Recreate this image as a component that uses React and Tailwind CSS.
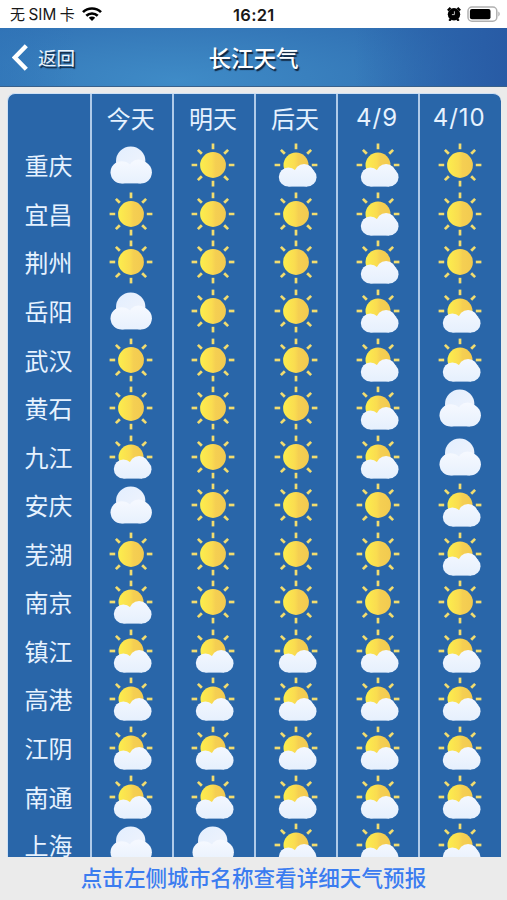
import React from 'react';

// s = sunny, p = partly cloudy, c = cloudy
const days = ['今天', '明天', '后天', '4/9', '4/10'];

const cities = [
  { name: '重庆', forecast: 'cspps' },
  { name: '宜昌', forecast: 'sssps' },
  { name: '荆州', forecast: 'sssps' },
  { name: '岳阳', forecast: 'csspp' },
  { name: '武汉', forecast: 'ssspp' },
  { name: '黄石', forecast: 'ssspc' },
  { name: '九江', forecast: 'psspc' },
  { name: '安庆', forecast: 'csssp' },
  { name: '芜湖', forecast: 'ssssp' },
  { name: '南京', forecast: 'pssss' },
  { name: '镇江', forecast: 'ppppp' },
  { name: '高港', forecast: 'ppppp' },
  { name: '江阴', forecast: 'ppppp' },
  { name: '南通', forecast: 'ppppp' },
  { name: '上海', forecast: 'ccppp' },
];

const Gradients = () => (
  <svg className="absolute w-0 h-0" aria-hidden="true">
    <defs>
      <linearGradient id="sun" x1="0" x2="1" y1="0" y2="0">
        <stop offset="0" stopColor="#fcee4d" />
        <stop offset="0.45" stopColor="#fadc50" />
        <stop offset="0.6" stopColor="#f5cf52" />
        <stop offset="1" stopColor="#f2ca50" />
      </linearGradient>
      <linearGradient id="cloudBack" gradientUnits="userSpaceOnUse" x1="-14" x2="8" y1="-14" y2="8">
        <stop offset="0" stopColor="#e4effe" />
        <stop offset="1" stopColor="#eff3fc" />
      </linearGradient>
      <linearGradient id="cloudFront" gradientUnits="userSpaceOnUse" x1="0" x2="0" y1="-5" y2="21">
        <stop offset="0" stopColor="#f6f9ff" />
        <stop offset="1" stopColor="#e6f0fd" />
      </linearGradient>
    </defs>
  </svg>
);

const Rays = ({ half }) => (
  <g stroke="#f1dc70" strokeWidth="2.7">
    {(half ? [180, 225, 270, 315, 0] : [0, 45, 90, 135, 180, 225, 270, 315]).map((angle) => (
      <path key={angle} d="M15.8 0H21.4" transform={`rotate(${angle})`} />
    ))}
  </g>
);

const WeatherIcon = ({ type }) => (
  <svg viewBox="-24 -24 48 48" className="w-12 h-12 shrink-0 overflow-visible">
    {type !== 'c' && (
      <>
        <Rays half={type === 'p'} />
        <circle r={type === 'p' ? 12.5 : 12.9} fill="url(#sun)" />
      </>
    )}
    {type === 'p' && (
      <g fill="url(#cloudFront)">
        <circle cx="-7.6" cy="12" r="9.6" />
        <circle cx="8.1" cy="8.8" r="9.8" />
        <circle cx="11.1" cy="12.2" r="9.4" />
        <rect x="-7.6" y="10" width="18.7" height="11.6" />
      </g>
    )}
    {type === 'c' && (
      <>
        <circle cx="-.3" cy="-3.9" r="14.7" fill="url(#cloudBack)" />
        <g fill="url(#cloudFront)">
          <circle cx="-9.4" cy="7.3" r="11.1" />
          <circle cx="-7.5" cy="6.6" r="9.6" />
          <circle cx="7.6" cy="4.6" r="10.2" />
          <circle cx="9.8" cy="7.3" r="11.1" />
          <rect x="-9.4" y="4" width="19.2" height="14.4" />
        </g>
      </>
    )}
  </svg>
);

const StatusBar = () => (
  <div className="relative h-7 shrink-0 bg-white flex items-center justify-between pl-[10px] pr-[6px] text-[#181818]">
    <div className="flex items-center">
      <span className="text-[15px] leading-7 whitespace-nowrap">
        无<span className="mx-[3.5px] text-[15.3px] font-['Inter']">SIM</span>卡
      </span>
      <svg viewBox="0 0 20 14" className="ml-[7px] w-5 h-[14px]" fill="none" stroke="#000" strokeWidth="2.7">
        <path d="M1 5.1A13 13 0 0 1 19 5.1" />
        <path d="M4.3 8.8A8.2 8.2 0 0 1 15.7 8.8" />
        <path d="M10 14L6.8 10.8A4.6 4.6 0 0 1 13.2 10.8Z" fill="#000" stroke="none" />
      </svg>
    </div>
    <span className="absolute left-[233px] top-[1px] leading-7 text-[16.5px] tracking-[0.3px] font-semibold font-['Inter']">16:21</span>
    <div className="flex items-center">
      <svg viewBox="0 0 14 14" className="w-[14px] h-[14px] mr-[6px]">
        <path d="M.8 3.5L3.5.8M13.2 3.5L10.5.8M2.2 13.8L4 12M11.8 13.8L10 12" stroke="#000" strokeWidth="2.2" />
        <circle cx="7" cy="7.3" r="6.2" fill="#000" />
        <path d="M7.4 4.3V7.6H4.9" fill="none" stroke="#bbb" strokeWidth="1" />
      </svg>
      <svg viewBox="0 0 34 16" className="w-[34px] h-4">
        <rect x="1" y="1" width="28.8" height="14.2" rx="4" fill="none" stroke="#b0b0b0" strokeWidth="1.5" />
        <rect x="2.9" y="2.9" width="20.6" height="10.4" rx="2" fill="#000" />
        <path d="M31.3 5.6C33.2 6.3 33.2 9.7 31.3 10.4Z" fill="#b0b0b0" />
      </svg>
    </div>
  </div>
);

const Header = () => (
  <header className="relative h-[59px] shrink-0 flex items-center border-b border-[#38618c] bg-[radial-gradient(ellipse_65%_140%_at_35%_90%,#3f8bc7_0%,#3980be_40%,#2f6eb2_100%)] text-white [text-shadow:1.5px_1.5px_1px_#10243c]">
    <div className="absolute inset-0 bg-linear-to-r from-[#2f74b8]/50 from-0% via-transparent via-15% to-transparent" />
    <div className="absolute inset-0 bg-linear-to-r from-transparent from-70% to-[#285ba5]" />
    <svg viewBox="0 0 16 27" className="relative ml-[12px] w-4 h-[27px]" fill="none" stroke="#fff" strokeWidth="4.4">
      <path d="M14.3 1.8L2.8 13.5L14.3 25.2" />
    </svg>
    <span className="relative ml-[10px] text-[18.5px] leading-none text-[#eef5fb]">返回</span>
    <h1 className="absolute inset-x-0 text-center text-[22.5px] leading-none font-medium">长江天气</h1>
  </header>
);

const Column = ({ children, first }) => (
  <div className={`flex flex-col items-center ${first ? 'pr-px' : 'pr-[1.5px] border-l-2 border-[#b0cbe9]'}`}>
    {children}
  </div>
);

const App = () => {
  return (
    <div className="w-full h-[900px] overflow-hidden flex flex-col bg-[#ebebeb] font-['Noto_Sans_CJK_SC',sans-serif]">
      <Gradients />
      <StatusBar />
      <Header />
      <main className="mt-[6px] ml-[7px] w-[493.5px] h-[764px] shrink-0 overflow-hidden grid grid-cols-6 rounded-t-[8px] border-t border-l border-[#cfe1f5] bg-[#2966a9] text-[#e6f2ff] text-[24px] font-normal">
        <Column first>
          <div className="h-[47px] shrink-0" />
          {cities.map((city) => (
            <div key={city.name} className="h-[48.57px] shrink-0 flex items-center leading-none">
              {city.name}
            </div>
          ))}
        </Column>
        {days.map((day, index) => (
          <Column key={day}>
            <div className="h-[47px] shrink-0 flex items-center pr-px leading-none">
              {day.includes('/') ? <span className="font-['Inter'] tracking-[1px]">{day}</span> : day}
            </div>
            {cities.map((city) => (
              <div key={city.name} className="h-[48.57px] shrink-0 flex items-center">
                <WeatherIcon type={city.forecast[index]} />
              </div>
            ))}
          </Column>
        ))}
      </main>
      <footer className="h-[43px] pb-[3px] flex items-center justify-center text-[21.6px] leading-none font-medium text-[#3b7cf0]">
        点击左侧城市名称查看详细天气预报
      </footer>
    </div>
  );
};

export default App;
